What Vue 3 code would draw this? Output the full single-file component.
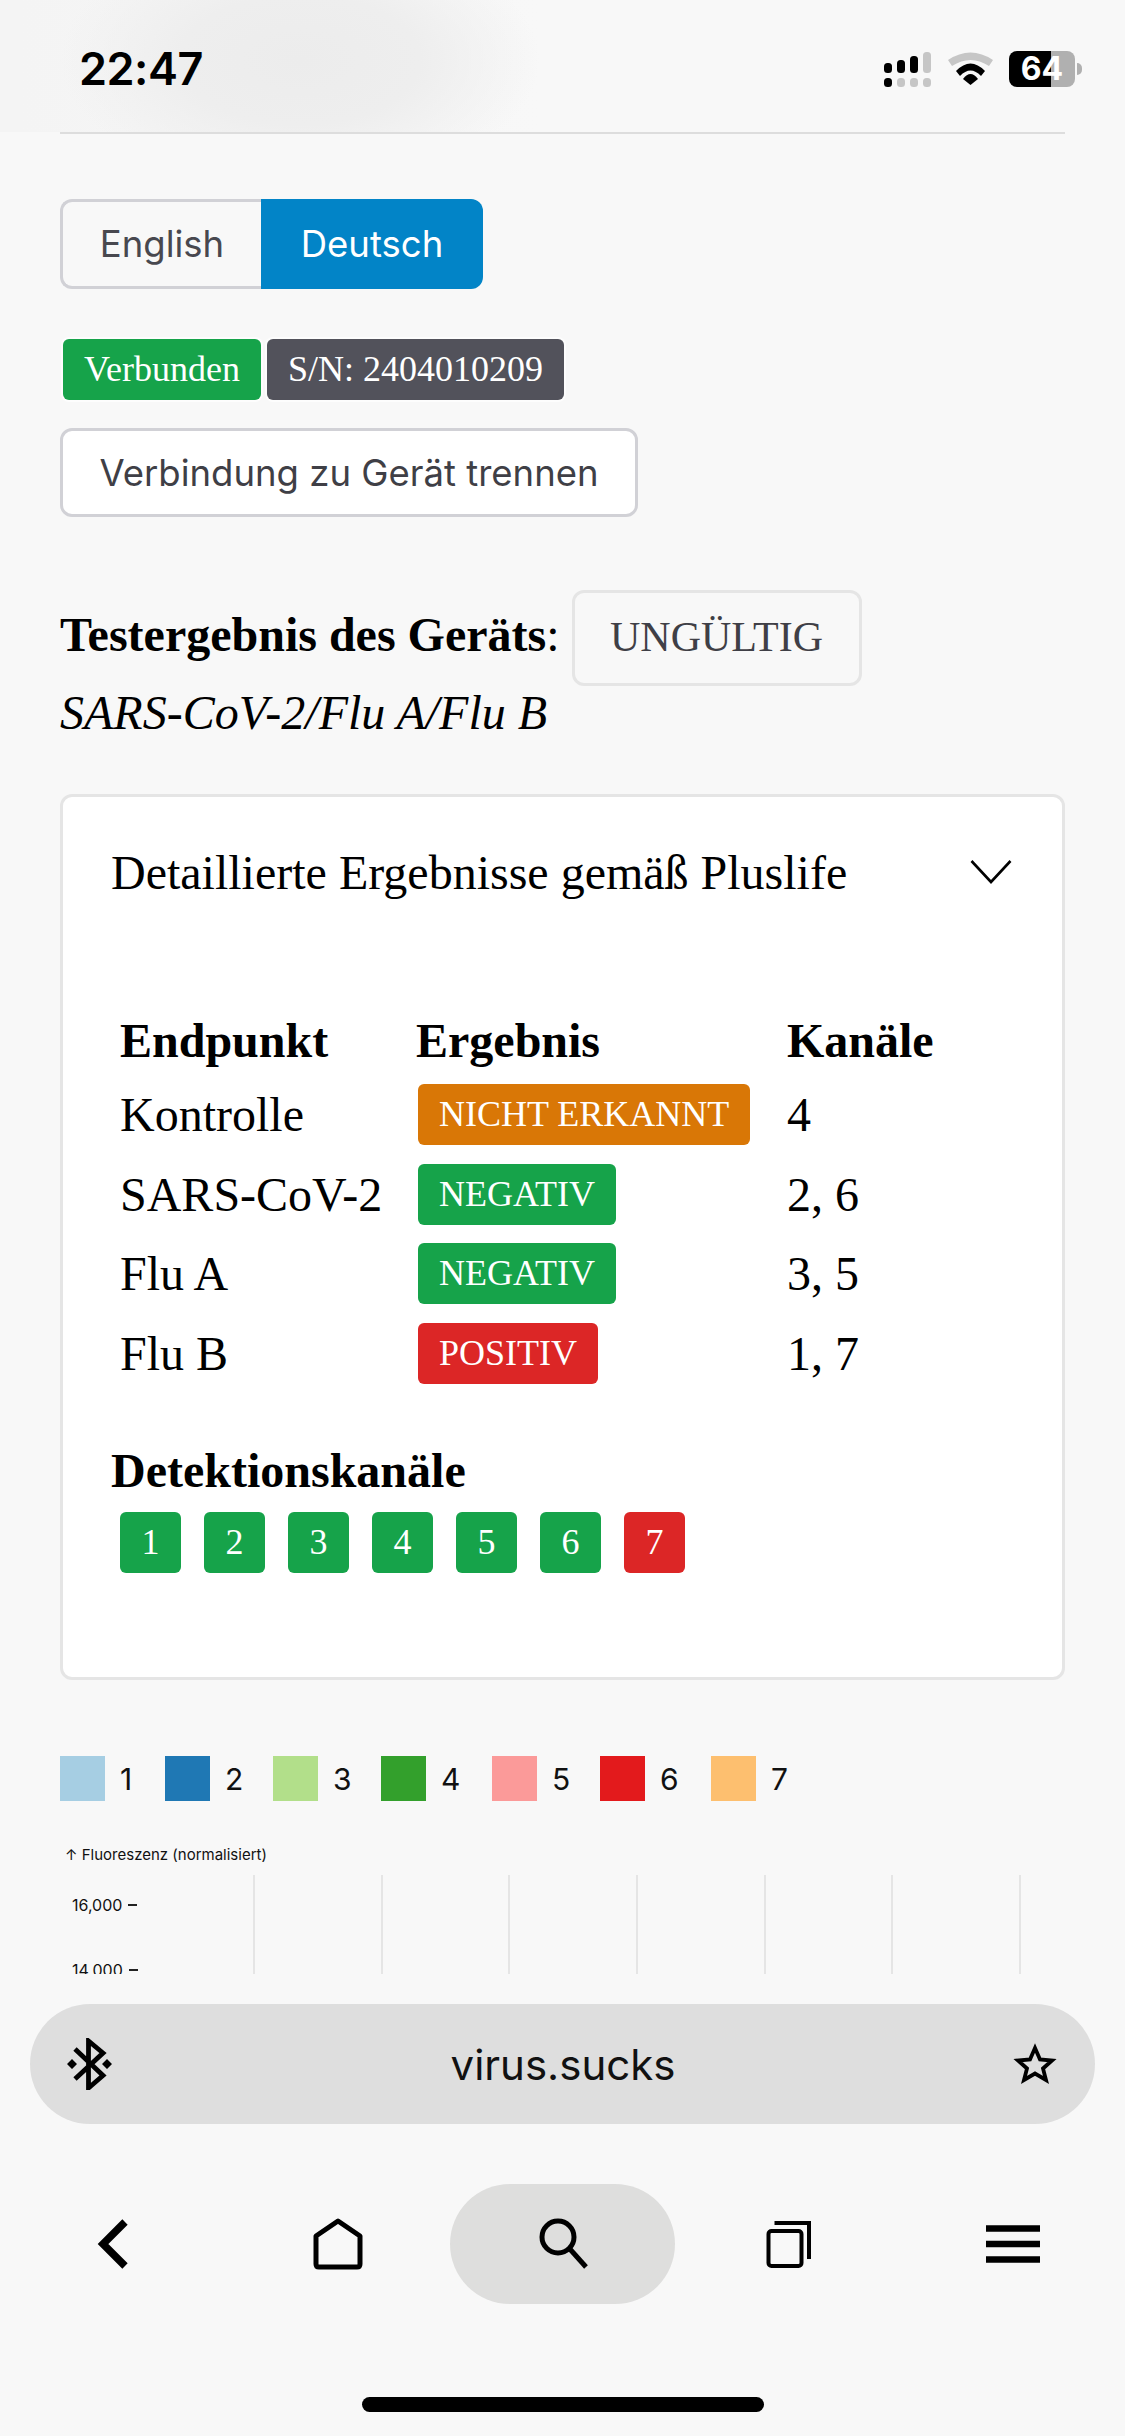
<script setup>
const rows = [
  { name: 'Kontrolle', result: 'NICHT ERKANNT', tone: 'orange', channels: '4' },
  { name: 'SARS-CoV-2', result: 'NEGATIV', tone: 'green', channels: '2, 6' },
  { name: 'Flu A', result: 'NEGATIV', tone: 'green', channels: '3, 5' },
  { name: 'Flu B', result: 'POSITIV', tone: 'red', channels: '1, 7' },
]
const detection = [
  { n: 1, tone: 'green' }, { n: 2, tone: 'green' }, { n: 3, tone: 'green' },
  { n: 4, tone: 'green' }, { n: 5, tone: 'green' }, { n: 6, tone: 'green' }, { n: 7, tone: 'red' },
]
const legend = [
  { n: 1, color: '#a6cee3', w: 105 }, { n: 2, color: '#1f78b4', w: 108 }, { n: 3, color: '#b2df8a', w: 108 },
  { n: 4, color: '#33a02c', w: 111 }, { n: 5, color: '#fb9a99', w: 108 }, { n: 6, color: '#e31a1c', w: 111 }, { n: 7, color: '#fdbf6f', w: 108 },
]
</script>

<template>
  <div class="phone">
    <header class="status">
      <span class="time">22:47</span>
      <div class="status-icons">
        <svg width="47" height="35" viewBox="0 0 47 35" class="signal">
          <g fill="#000">
            <rect x="0" y="11" width="8" height="10" rx="3.500" />
            <rect x="13" y="8" width="8" height="13" rx="3.500" />
            <rect x="26" y="4" width="8" height="17" rx="3.500" />
            <rect x="0" y="26" width="8" height="9" rx="3.500" />
          </g>
          <g fill="#c6c6c6">
            <rect x="39" y="0" width="8" height="21" rx="3.500" />
            <rect x="13" y="26" width="8" height="9" rx="3.500" />
            <rect x="26" y="26" width="8" height="9" rx="3.500" />
            <rect x="39" y="26" width="8" height="9" rx="3.500" />
          </g>
        </svg>
        <svg width="45" height="33" viewBox="0 0 45 33" class="wifi">
          <path d="M0 8 Q22.500 -7 45 8 L41 14 Q22.500 2 4 14 Z" fill="#c6c6c6" />
          <path d="M8 19 Q22.500 4 37 19 L33 24 Q22.500 13 12 24 Z" fill="#000" />
          <path d="M15 27 Q22.500 17 30 27 L22.500 33 Z" fill="#000" />
        </svg>
        <div class="battery">
          <span class="battery-text">64</span>
          <i class="battery-nub"></i>
        </div>
      </div>
    </header>

    <main class="content">
      <div class="lang">
        <button class="lang-btn">English</button>
        <button class="lang-btn active">Deutsch</button>
      </div>

      <div class="badges">
        <span class="badge green">Verbunden</span>
        <span class="badge grey">S/N: 2404010209</span>
      </div>

      <button class="outline-btn">Verbindung zu Gerät trennen</button>

      <div class="result-line">
        <strong>Testergebnis des Geräts</strong><span>:</span>
        <span class="result-box">UNGÜLTIG</span>
      </div>
      <p class="assay">SARS-CoV-2/Flu A/Flu B</p>

      <section class="card">
        <div class="card-head">
          <span>Detaillierte Ergebnisse gemäß Pluslife</span>
          <svg width="42" height="26" viewBox="0 0 42 26" class="chev">
            <path d="M1.500 2 L21 23 L40.500 2" fill="none" stroke="#000" stroke-width="2.600" />
          </svg>
        </div>

        <table class="table">
          <thead>
            <tr><th>Endpunkt</th><th>Ergebnis</th><th>Kanäle</th></tr>
          </thead>
          <tbody>
            <tr v-for="r in rows" :key="r.name">
              <td>{{ r.name }}</td>
              <td><span class="badge big" :class="r.tone">{{ r.result }}</span></td>
              <td>{{ r.channels }}</td>
            </tr>
          </tbody>
        </table>

        <h3 class="det-title">Detektionskanäle</h3>
        <div class="det-row">
          <span v-for="d in detection" :key="d.n" class="det" :class="d.tone">{{ d.n }}</span>
        </div>
      </section>

      <div class="legend">
        <div v-for="l in legend" :key="l.n" class="legend-item" :style="{ width: l.w + 'px' }">
          <i class="swatch" :style="{ background: l.color }"></i>
          <span>{{ l.n }}</span>
        </div>
      </div>

      <div class="chart">
        <div class="chart-title">↑ Fluoreszenz (normalisiert)</div>
        <div class="plot">
          <div class="ticks">
            <div class="tick">16,000 <i></i></div>
            <div class="tick">14,000 <i></i></div>
          </div>
          <div class="grid">
            <i v-for="g in 7" :key="g"></i>
          </div>
        </div>
      </div>
    </main>

    <footer class="browser">
      <div class="url">
        <svg width="47" height="52" viewBox="0 0 47 52" class="bt">
          <path d="M9 11 L37 37.500 L22.500 50 L22.500 3 L37 15 L9 41" fill="none" stroke="#000" stroke-width="4.800" />
          <path d="M6 21 L11 26 L6 31 L1 26 Z M41 21 L46 26 L41 31 L36 26 Z" fill="#000" />
        </svg>
        <span class="url-text">virus.sucks</span>
        <svg width="44" height="42" viewBox="0 0 44 42" class="star">
          <path d="M22 5 L27 16.500 L39 17.500 L30 25.500 L33 37 L22 30.500 L11 37 L14 25.500 L5 17.500 L17 16.500 Z" fill="none" stroke="#000" stroke-width="3.800" stroke-linejoin="miter" />
        </svg>
      </div>
      <nav class="nav">
        <div class="nav-cell">
          <svg width="36" height="50" viewBox="0 0 36 50"><path d="M30 3 L8 25 L30 47" fill="none" stroke="#000" stroke-width="7.500" /></svg>
        </div>
        <div class="nav-cell">
          <svg width="50" height="52" viewBox="0 0 50 52"><path d="M25 3 L47 18 V46 Q47 49 44 49 H6 Q3 49 3 46 V18 Z" fill="none" stroke="#000" stroke-width="5" stroke-linejoin="round" /></svg>
        </div>
        <div class="nav-cell search">
          <svg width="50" height="54" viewBox="0 0 50 54"><circle cx="20" cy="20" r="16" fill="none" stroke="#000" stroke-width="5" /><path d="M31 31 L48 50" stroke="#000" stroke-width="5" fill="none" /></svg>
        </div>
        <div class="nav-cell">
          <svg width="46" height="50" viewBox="0 0 46 50"><rect x="3.500" y="12" width="33" height="35" rx="3" fill="none" stroke="#000" stroke-width="4" /><path d="M9.500 4 H44 V40" fill="none" stroke="#000" stroke-width="4" /></svg>
        </div>
        <div class="nav-cell">
          <svg width="54" height="38" viewBox="0 0 54 38"><path d="M0 3.500 H54 M0 19 H54 M0 34.500 H54" stroke="#000" stroke-width="6.500" /></svg>
        </div>
      </nav>
      <div class="home-row"><i class="home-bar"></i></div>
    </footer>
  </div>
</template>

<style scoped>
.phone {
  position: relative;
  width: 1125px;
  height: 2436px;
  overflow: hidden;
  background: #f8f8f8;
  font-family: "Liberation Serif", "Times New Roman", serif;
  color: #000;
}
.status {
  height: 132px;
  box-sizing: border-box;
  display: flex;
  align-items: flex-start;
  justify-content: space-between;
  padding: 45px 50px 0 79px;
  background:
    radial-gradient(ellipse 240px 130px at 300px 60px, #ececec 0%, #eeeeee 50%, rgba(248, 248, 248, 0) 100%),
    linear-gradient(90deg, #f4f4f4 0, #f4f4f4 20px, #f8f8f8 540px);
}
.time {
  font-family: Inter, "Liberation Sans", sans-serif;
  font-weight: 600;
  font-size: 45px;
  line-height: 48px;
  letter-spacing: -0.5px;
}
.status-icons {
  display: flex;
  align-items: flex-start;
  gap: 16px;
  padding-top: 6px;
}
.signal { margin-top: 1px; }
.wifi { margin-top: 1px; margin-left: 1px; }
.battery {
  position: relative;
  width: 66px;
  height: 36px;
  border-radius: 8px;
  background: linear-gradient(90deg, #000 0, #000 42px, #b0b0b0 42px, #b0b0b0 100%);
  display: flex;
  align-items: center;
  justify-content: center;
}
.battery-text {
  font-family: Inter, "Liberation Sans", sans-serif;
  font-size: 32px;
  font-weight: 700;
  line-height: 36px;
  color: #fff;
}
.battery-nub {
  position: absolute;
  right: -7px;
  top: 12px;
  width: 5px;
  height: 12px;
  border-radius: 0 6px 6px 0;
  background: #b0b0b0;
}
.content {
  box-sizing: border-box;
  width: 1005px;
  margin-left: 60px;
  border-top: 2px solid #dddddd;
  font-size: 48px;
}
.lang {
  display: flex;
  margin-top: 65px;
  height: 90px;
}
.lang-btn {
  box-sizing: border-box;
  width: 201px;
  height: 90px;
  padding: 0;
  border: 3px solid #d1d1d6;
  border-right: 0;
  border-radius: 12px 0 0 12px;
  background: #f8f8f8;
  color: #48484f;
  font-family: Inter, "Liberation Sans", sans-serif;
  font-size: 36.500px;
}
.lang-btn.active {
  width: 222px;
  border: 0;
  border-radius: 0 12px 12px 0;
  background: #0284c7;
  color: #fff;
}
.badges {
  display: flex;
  gap: 6px;
  margin-top: 50px;
  padding-left: 3px;
}
.badge {
  display: inline-block;
  box-sizing: border-box;
  height: 61px;
  line-height: 61px;
  padding: 0 21px;
  border-radius: 6px;
  font-size: 36px;
  color: #fff;
}
.badges .badge { box-shadow: 0 0 0 2px rgba(255, 255, 255, 0.7); }
.green { background: #16a34a; }
.grey { background: #52525b; }
.orange { background: #d97706; }
.red { background: #dc2626; }
.outline-btn {
  display: block;
  box-sizing: border-box;
  width: 578px;
  height: 89px;
  margin-top: 28px;
  padding: 0;
  border: 3px solid #d1d1d6;
  border-radius: 12px;
  background: #fff;
  color: #3f3f46;
  font-family: Inter, "Liberation Sans", sans-serif;
  font-size: 36.500px;
}
.result-line {
  display: flex;
  align-items: baseline;
  margin-top: 70px;
  line-height: 96px;
}
.result-box {
  box-sizing: border-box;
  height: 96px;
  line-height: 88px;
  width: 290px;
  margin-left: 12px;
  border: 3px solid #e5e5e5;
  border-radius: 12px;
  text-align: center;
  font-size: 42px;
  color: #3f3f46;
}
.assay {
  margin: -3px 0 0;
  font-style: italic;
  line-height: 60px;
}
.card {
  box-sizing: border-box;
  height: 886px;
  margin-top: 51px;
  padding: 0 50px 0 48px;
  background: #fff;
  border: 3px solid #e5e5e5;
  border-radius: 12px;
}
.card-head {
  display: flex;
  align-items: center;
  justify-content: space-between;
  height: 150px;
  padding-right: 1px;
}
.chev { margin-right: -1px; }
.table {
  border-collapse: collapse;
  margin-top: 59px;
  margin-left: 9px;
}
.table th {
  padding: 0;
  height: 69px;
  text-align: left;
  font-size: 48px;
}
.table td {
  height: 79.500px;
  padding: 0;
  vertical-align: middle;
}
.table th:nth-child(1), .table td:nth-child(1) { width: 296px; }
.table th:nth-child(2), .table td:nth-child(2) { width: 371px; }
.badge.big {
  display: block;
  width: max-content;
  margin-left: 2px;
  padding: 0 21px;
}
.det-title {
  margin: 48px 0 0;
  font-size: 48px;
  line-height: 60px;
}
.det-row {
  display: flex;
  gap: 23px;
  margin-top: 11px;
  margin-left: 9px;
}
.det {
  width: 61px;
  height: 61px;
  line-height: 61px;
  text-align: center;
  border-radius: 6px;
  font-size: 36px;
  color: #fff;
}
.legend {
  display: flex;
  margin-top: 76px;
  font-family: Inter, "Liberation Sans", sans-serif;
  font-size: 30px;
  color: #111;
}
.legend-item {
  display: flex;
  align-items: center;
  gap: 15px;
}
.swatch {
  display: block;
  width: 45px;
  height: 45px;
}
.chart {
  margin-top: 44px;
  font-family: Inter, "Liberation Sans", sans-serif;
  color: #111;
}
.chart-title {
  font-size: 15px;
  line-height: 20px;
  padding-left: 5px;
  margin-bottom: 10px;
}
.plot {
  display: flex;
  height: 120px;
}
.ticks {
  width: 193px;
  padding-top: 20px;
  box-sizing: border-box;
}
.tick {
  display: flex;
  align-items: center;
  gap: 6px;
  height: 20px;
  margin-bottom: 45px;
  padding-left: 12px;
  font-size: 16px;
}
.tick i {
  display: block;
  width: 9px;
  height: 2px;
  background: #222;
}
.grid {
  display: flex;
  gap: 125.670px;
  height: 120px;
}
.grid i {
  display: block;
  width: 2px;
  height: 120px;
  background: #e5e5e5;
}
.browser {
  position: absolute;
  left: 0;
  right: 0;
  top: 1974px;
  bottom: 0;
  background: #f8f8f8;
}
.url {
  display: flex;
  align-items: center;
  justify-content: space-between;
  box-sizing: border-box;
  height: 120px;
  margin: 30px 30px 0;
  padding: 0 38px 0 36px;
  border-radius: 60px;
  background: #dedede;
}
.url-text {
  font-family: Inter, "Liberation Sans", sans-serif;
  font-size: 42px;
  color: #111;
}
.nav {
  display: grid;
  grid-template-columns: 225px 225px 225px 225px 225px;
  margin-top: 60px;
}
.nav-cell {
  display: flex;
  align-items: center;
  justify-content: center;
  height: 120px;
}
.search {
  border-radius: 60px;
  background: #dededd;
}
.home-row {
  display: flex;
  justify-content: center;
  margin-top: 93px;
}
.home-bar {
  display: block;
  width: 402px;
  height: 15px;
  border-radius: 8px;
  background: #000;
}
</style>
